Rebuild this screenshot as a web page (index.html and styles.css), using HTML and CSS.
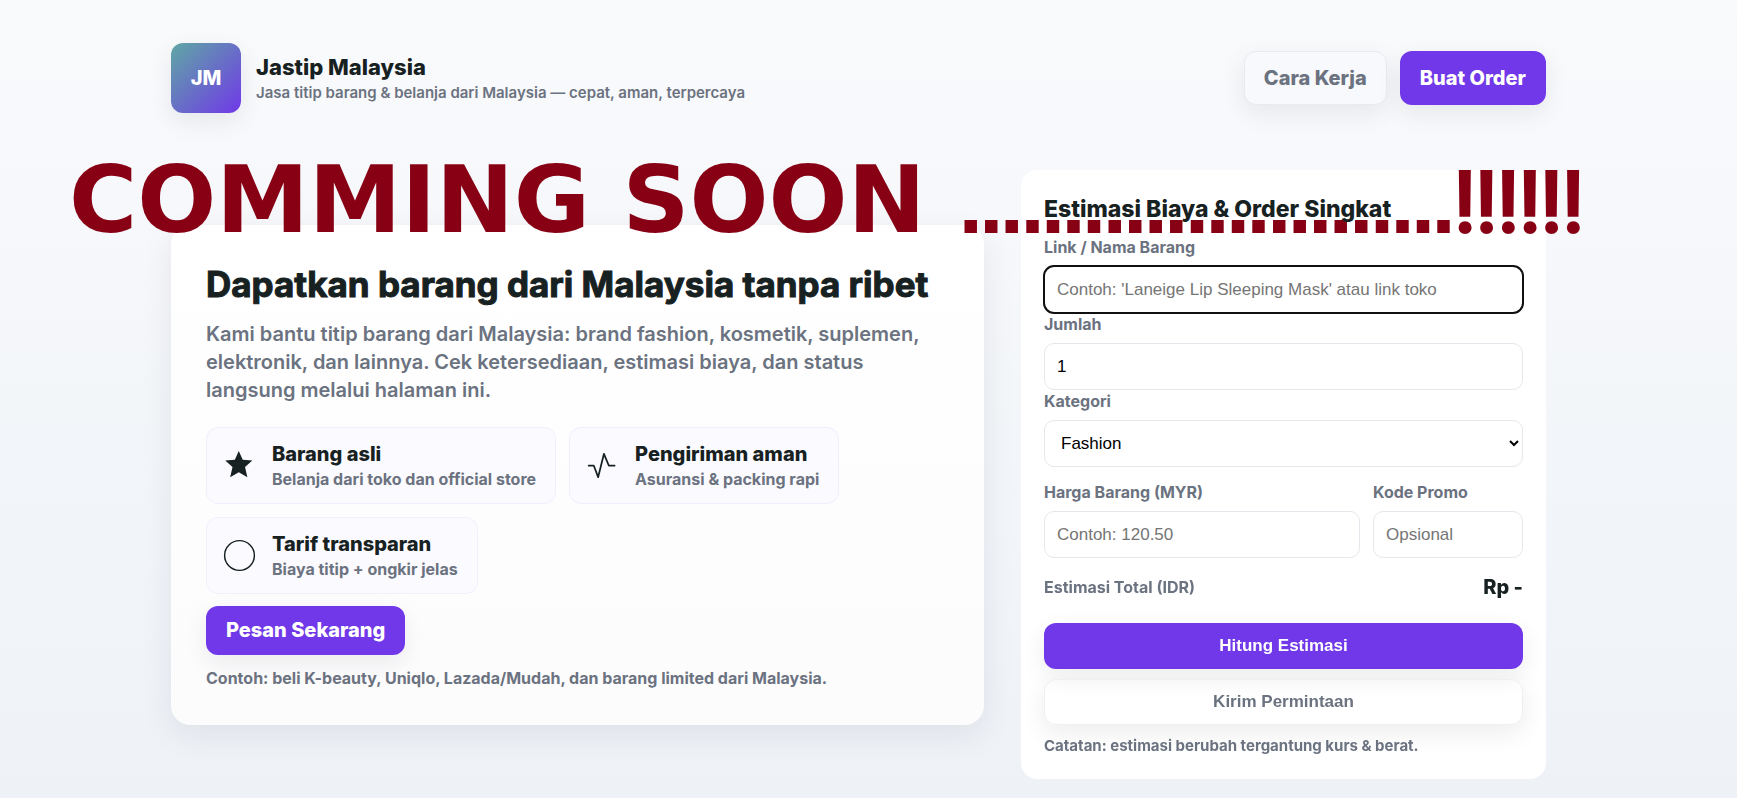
FILE: index.html
```
<!DOCTYPE html>
<html lang="id">
<head>
<meta charset="utf-8">
<meta name="viewport" content="width=device-width, initial-scale=1">
<title>Jastip Malaysia</title>
<link rel="stylesheet" href="styles.css">
</head>
<body>
<div class="page">
  <header class="header">
    <div class="brand">
      <div class="logo">JM</div>
      <div class="brand-text">
        <div class="brand-name">Jastip Malaysia</div>
        <div class="brand-sub">Jasa titip barang &amp; belanja dari Malaysia — cepat, aman, terpercaya</div>
      </div>
    </div>
    <nav class="nav">
      <a class="btn btn-ghost" href="#cara">Cara Kerja</a>
      <a class="btn btn-primary" href="#order">Buat Order</a>
    </nav>
  </header>
  <div class="banner"><span class="banner-word">COMMING SOON</span><span class="banner-dots">........................</span><span class="banner-marks">!!!!!!</span></div>
  <main class="layout">
    <section class="hero">
      <h1>Dapatkan barang dari Malaysia tanpa ribet</h1>
      <p class="lead">Kami bantu titip barang dari Malaysia: brand fashion, kosmetik, suplemen, elektronik, dan lainnya. Cek ketersediaan, estimasi biaya, dan status langsung melalui halaman ini.</p>
      <div class="features">
        <div class="feature">
          <svg class="icon" viewBox="0 0 24 24" aria-hidden="true"><path fill="currentColor" d="M11.500 2l2.700 6 6.600.6-5 4.400 1.600 7-5.900-3.400-5.900 3.400 1.600-7-5-4.400 6.600-.6z"/></svg>
          <div><div class="feature-title">Barang asli</div><div class="muted">Belanja dari toko dan official store</div></div>
        </div>
        <div class="feature">
          <svg class="icon" viewBox="0 0 24 24" aria-hidden="true"><path fill="none" stroke="currentColor" stroke-width="1.200" stroke-linecap="round" stroke-linejoin="round" d="M2.500 12h3.500l3 8 4-16 3.300 8h4"/></svg>
          <div><div class="feature-title">Pengiriman aman</div><div class="muted">Asuransi &amp; packing rapi</div></div>
        </div>
        <div class="feature">
          <svg class="icon" viewBox="0 0 24 24" aria-hidden="true"><circle cx="12" cy="12" r="10.200" fill="none" stroke="currentColor"/></svg>
          <div><div class="feature-title">Tarif transparan</div><div class="muted">Biaya titip + ongkir jelas</div></div>
        </div>
      </div>
      <a class="btn btn-primary btn-hero" href="#order">Pesan Sekarang</a>
      <p class="muted example">Contoh: beli K-beauty, Uniqlo, Lazada/Mudah, dan barang limited dari Malaysia.</p>
    </section>
    <form class="order" id="order">
      <h2>Estimasi Biaya &amp; Order Singkat</h2>
      <label for="item">Link / Nama Barang</label>
      <input id="item" type="text" placeholder="Contoh: 'Laneige Lip Sleeping Mask' atau link toko" autofocus>
      <label for="qty">Jumlah</label>
      <input id="qty" type="text" inputmode="numeric" value="1">
      <label for="cat">Kategori</label>
      <select id="cat"><option>Fashion</option></select>
      <div class="row">
        <div class="price"><label for="price">Harga Barang (MYR)</label><input id="price" type="text" placeholder="Contoh: 120.50"></div>
        <div class="promo"><label for="promo">Kode Promo</label><input id="promo" type="text" placeholder="Opsional"></div>
      </div>
      <div class="total"><span class="muted">Estimasi Total (IDR)</span><strong>Rp -</strong></div>
      <button class="action action-primary" type="button">Hitung Estimasi</button>
      <button class="action action-ghost" type="button">Kirim Permintaan</button>
      <p class="note">Catatan: estimasi berubah tergantung kurs &amp; berat.</p>
    </form>
  </main>
</div>
</body>
</html>
```
FILE: styles.css
```
* { box-sizing: border-box; }
body {
  margin: 0;
  min-height: 100vh;
  padding: 0 20px 0 0;
  background: linear-gradient(180deg, #f9fafc, #eef2f7);
  color: #172121;
  font-family: Inter, "Open Sans", sans-serif;
  font-size: 16px;
  font-weight: 700;
}
.page {
  position: relative;
  max-width: 1375px;
  margin: 0 auto;
  padding: 43px 0 19px;
}
.header {
  display: flex;
  justify-content: space-between;
  align-items: center;
  margin-bottom: 57px;
}
.brand { display: flex; align-items: center; gap: 15px; }
.brand-text { padding-top: 2px; }
.logo {
  display: grid;
  place-items: center;
  width: 70px;
  height: 70px;
  border-radius: 12px;
  background: linear-gradient(135deg, #5fa8a4, #7038e8);
  box-shadow: 0 8px 24px rgba(20, 25, 40, 0.08);
  color: #fff;
  font-size: 20px;
  font-weight: 800;
}
.brand-name { font-size: 22px; line-height: 28px; font-weight: 800; }
.brand-sub { color: #6b7280; font-size: 15px; line-height: 24px; font-weight: 600; }
.nav { display: flex; gap: 13px; }
.btn {
  display: inline-block;
  padding: 13px 20px;
  border-radius: 12px;
  box-shadow: 0 8px 24px rgba(20, 25, 40, 0.08);
  font-size: 20px;
  line-height: 28px;
  font-weight: 800;
  text-decoration: none;
}
.btn-primary { background: #7038e8; color: #fff; }
.btn-ghost { border: 1px solid #e9eaee; background: #f8f9fc; color: #6b7280; padding: 12px 19px; }
.btn-hero { margin-top: 12px; padding: 10px 20px 11px; }
.banner {
  position: absolute;
  top: 144px;
  left: -102px;
  z-index: 1;
  display: flex;
  align-items: baseline;
  color: #870014;
  line-height: 112px;
  white-space: nowrap;
  pointer-events: none;
}
.banner-word { margin-right: 35px; font-family: "DejaVu Sans", sans-serif; font-size: 93px; font-weight: 700; }
.banner-dots { font-family: "Liberation Sans", sans-serif; font-size: 74px; font-weight: 700; -webkit-text-stroke: 2px #870014; }
.banner-marks { font-family: Roboto, sans-serif; font-size: 84px; font-weight: 400; -webkit-text-stroke: 4px #870014; }
.layout {
  display: grid;
  grid-template-columns: minmax(0, 1fr) 525px;
  gap: 37px;
  align-items: center;
}
.hero {
  padding: 35px;
  border-radius: 20px;
  background: linear-gradient(180deg, #fff, #fcfcfd);
  box-shadow: 0 10px 32px rgba(20, 25, 40, 0.08);
}
h1 { margin: 0 0 12px; font-size: 35px; line-height: 48px; font-weight: 700; -webkit-text-stroke: 1px #172121; }
.lead { margin: 0 0 23px; color: #6b7280; font-size: 20px; line-height: 28px; font-weight: 600; }
.features { display: flex; flex-wrap: wrap; gap: 13px; }
.feature {
  display: flex;
  align-items: center;
  gap: 15px;
  padding: 12px 19px 12px 15px;
  border: 1px solid #f1effd;
  border-radius: 12px;
  background: #fbfaff;
}
.icon { width: 35px; height: 35px; flex: none; }
.feature-title { font-size: 20px; line-height: 28px; font-weight: 800; }
.muted { color: #6b7280; line-height: 23px; }
.example { margin: 12px 0 0; }
.order {
  padding: 23px;
  border-radius: 16px;
  background: #fff;
}
h2 { position: relative; z-index: 2; margin: 0 0 11px; font-size: 23px; line-height: 32px; font-weight: 800; }
label { display: block; margin-bottom: 7px; color: #6b7280; line-height: 23px; }
input, select {
  display: block;
  width: 100%;
  height: 47px;
  margin: 0;
  padding: 12px;
  border: 1px solid #e6e7ec;
  border-radius: 10px;
  background: #fff;
  color: #000;
  font-family: "Liberation Sans", Arial, sans-serif;
  font-size: 17px;
}
input::placeholder { color: #757575; }
input:focus { outline: 2px solid #101010; outline-offset: -1px; }
.row { display: flex; gap: 13px; margin-top: 14px; }
.price { flex: 1; }
.promo { width: 150px; }
.total { display: flex; justify-content: space-between; align-items: center; margin: 15px 0 21px; }
.total strong { font-size: 20px; line-height: 29px; font-weight: 800; }
.action {
  display: block;
  width: 100%;
  height: 46px;
  border: 0;
  border-radius: 12px;
  box-shadow: 0 8px 24px rgba(20, 25, 40, 0.08);
  font-family: "Liberation Sans", Arial, sans-serif;
  font-size: 17px;
  font-weight: 700;
}
.action-primary { background: #7038e8; color: #fff; }
.action-ghost { margin-top: 10px; border: 1px solid #eeeff1; background: transparent; color: #6b7280; }
.note { margin: 11px 0 0; color: #6b7280; font-size: 15px; line-height: 20px; }
```
